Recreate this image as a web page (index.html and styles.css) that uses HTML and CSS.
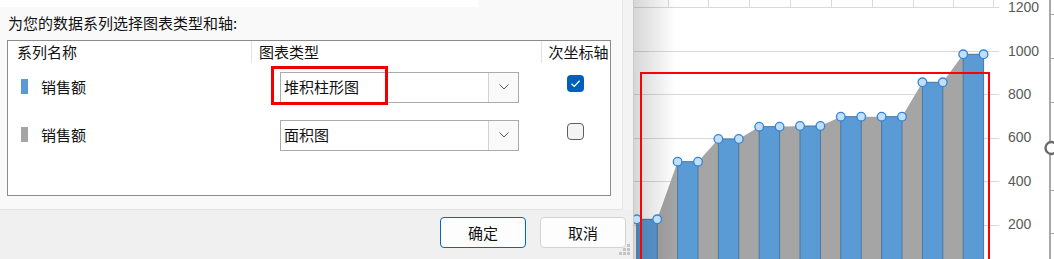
FILE: index.html
```html
<!DOCTYPE html>
<html lang="zh-CN">
<head>
  <meta charset="UTF-8">
  <title>更改图表类型</title>
  <link rel="stylesheet" href="styles.css">
</head>
<body>
  <div class="screen">
    <div class="dialog">
      <div class="panel">
        <div class="strip"></div>
        <p class="prompt">为您的数据系列选择图表类型和轴:</p>
        <div class="series-table">
          <div class="row head">
            <div class="cell name">系列名称</div>
            <div class="cell type">图表类型</div>
            <div class="cell axis">次坐标轴</div>
          </div>

          <div class="row">
            <div class="cell name"><span class="swatch blue"></span>销售额</div>
            <div class="cell type">
              <div class="select">
                <span class="select-text">堆积柱形图</span>
                <span class="select-arrow">
                  <svg width="10" height="6" viewBox="0 0 10 6"><path d="M0.5 0.5 L5 5 L9.5 0.5" fill="none" stroke="#555" stroke-width="1"/></svg>
                </span>
                <span class="mark"></span>
              </div>
            </div>
            <div class="cell axis">
              <span class="check on">
                <svg width="17" height="17" viewBox="0 0 17 17"><path d="M4.5 8.8 L7.3 11.4 L12.6 5.8" fill="none" stroke="#fff" stroke-width="1.3"/></svg>
              </span>
            </div>
          </div>

          <div class="row">
            <div class="cell name"><span class="swatch gray"></span>销售额</div>
            <div class="cell type">
              <div class="select">
                <span class="select-text">面积图</span>
                <span class="select-arrow">
                  <svg width="10" height="6" viewBox="0 0 10 6"><path d="M0.5 0.5 L5 5 L9.5 0.5" fill="none" stroke="#555" stroke-width="1"/></svg>
                </span>
              </div>
            </div>
            <div class="cell axis">
              <span class="check"></span>
            </div>
          </div>
        </div>
      </div>
      <div class="footer">
        <button class="btn default">确定</button>
        <button class="btn">取消</button>
        <svg class="grip" width="12" height="12" viewBox="0 0 12 12">
          <rect x="9" y="1" width="3" height="3" fill="#c4c4c4"/>
          <rect x="5" y="5" width="3" height="3" fill="#c4c4c4"/>
          <rect x="9" y="5" width="3" height="3" fill="#c4c4c4"/>
          <rect x="1" y="9" width="3" height="3" fill="#c4c4c4"/>
          <rect x="5" y="9" width="3" height="3" fill="#c4c4c4"/>
          <rect x="9" y="9" width="3" height="3" fill="#c4c4c4"/>
        </svg>
      </div>
    </div>

    <div class="chart">
      <svg width="420" height="259" viewBox="634 0 420 259">
        <defs>
          <linearGradient id="shade" x1="0" x2="1" y1="0" y2="0">
            <stop offset="0" stop-color="#000" stop-opacity="0.16"/>
            <stop offset="1" stop-color="#000" stop-opacity="0"/>
          </linearGradient>
        </defs>
        <rect x="634" y="0" width="420" height="259" fill="#fff"/>

        <!-- gridlines -->
        <g stroke="#d9d9d9" stroke-width="1">
          <line x1="634" y1="7.5" x2="999" y2="7.5"/>
          <line x1="634" y1="51.5" x2="999" y2="51.5"/>
          <line x1="634" y1="94.5" x2="999" y2="94.5"/>
          <line x1="634" y1="138.5" x2="999" y2="138.5"/>
          <line x1="634" y1="181.5" x2="999" y2="181.5"/>
          <line x1="634" y1="225.5" x2="999" y2="225.5"/>
          <line x1="668.5" y1="0" x2="668.5" y2="7"/>
          <line x1="708.5" y1="0" x2="708.5" y2="7"/>
          <line x1="749.5" y1="0" x2="749.5" y2="7"/>
          <line x1="790.5" y1="0" x2="790.5" y2="7"/>
          <line x1="831.5" y1="0" x2="831.5" y2="7"/>
          <line x1="872.5" y1="0" x2="872.5" y2="7"/>
          <line x1="913.5" y1="0" x2="913.5" y2="7"/>
          <line x1="953.5" y1="0" x2="953.5" y2="7"/>
          <line x1="993.5" y1="0" x2="993.5" y2="7"/>
        </g>

        <!-- area series -->
        <polygon fill="#a5a5a5" points="636.8,219.3 657.2,219.3 677.6,161.7 698,161.7 718.4,139 738.8,139 759.2,126.7 779.6,126.7 800,126 820.4,126 840.8,116.7 861.2,116.7 881.6,116.7 902,116.7 922.4,82.3 942.8,82.3 963.2,54.3 983.6,54.3 983.6,259 636.8,259"/>

        <!-- column series -->
        <g fill="#5b9bd5" stroke="#4a78a6" stroke-width="1">
          <rect x="636.8" y="219.3" width="20.4" height="45"/>
          <rect x="677.6" y="161.7" width="20.4" height="100"/>
          <rect x="718.4" y="139" width="20.4" height="125"/>
          <rect x="759.2" y="126.7" width="20.4" height="135"/>
          <rect x="800" y="126" width="20.4" height="135"/>
          <rect x="840.8" y="116.7" width="20.4" height="145"/>
          <rect x="881.6" y="116.7" width="20.4" height="145"/>
          <rect x="922.4" y="82.3" width="20.4" height="180"/>
          <rect x="963.2" y="54.3" width="20.4" height="210"/>
        </g>

        <rect x="634" y="0" width="42" height="259" fill="url(#shade)"/>

        <!-- selection handles -->
        <g fill="#c3def5" stroke="#2f86dc" stroke-width="1.3">
          <circle cx="636.8" cy="219.3" r="4.3"/>
          <circle cx="657.2" cy="219.3" r="4.3"/>
          <circle cx="677.6" cy="161.7" r="4.3"/>
          <circle cx="698" cy="161.7" r="4.3"/>
          <circle cx="718.4" cy="139" r="4.3"/>
          <circle cx="738.8" cy="139" r="4.3"/>
          <circle cx="759.2" cy="126.7" r="4.3"/>
          <circle cx="779.6" cy="126.7" r="4.3"/>
          <circle cx="800" cy="126" r="4.3"/>
          <circle cx="820.4" cy="126" r="4.3"/>
          <circle cx="840.8" cy="116.7" r="4.3"/>
          <circle cx="861.2" cy="116.7" r="4.3"/>
          <circle cx="881.6" cy="116.7" r="4.3"/>
          <circle cx="902" cy="116.7" r="4.3"/>
          <circle cx="922.4" cy="82.3" r="4.3"/>
          <circle cx="942.8" cy="82.3" r="4.3"/>
          <circle cx="963.2" cy="54.3" r="4.3"/>
          <circle cx="983.6" cy="54.3" r="4.3"/>
        </g>

        <!-- annotation -->
        <rect x="641" y="73" width="348" height="200" fill="none" stroke="#ff0000" stroke-width="2"/>

        <!-- secondary axis labels -->
        <g class="axis-label">
          <text x="1008" y="12">1200</text>
          <text x="1008" y="56">1000</text>
          <text x="1008" y="99">800</text>
          <text x="1008" y="142">600</text>
          <text x="1008" y="186">400</text>
          <text x="1008" y="229">200</text>
        </g>

        <!-- neighbouring chart edge -->
        <line x1="1050" y1="0" x2="1050" y2="259" stroke="#8c8c8c" stroke-width="1.5"/>
        <g stroke="#a6a6a6" stroke-width="1">
          <line x1="1050" y1="14.5" x2="1054" y2="14.5"/>
          <line x1="1050" y1="58.5" x2="1054" y2="58.5"/>
          <line x1="1050" y1="102.5" x2="1054" y2="102.5"/>
          <line x1="1050" y1="190.5" x2="1054" y2="190.5"/>
          <line x1="1050" y1="233.5" x2="1054" y2="233.5"/>
        </g>
        <circle cx="1051.5" cy="148" r="6" fill="#fff" stroke="#6a6a6a" stroke-width="2.4"/>
      </svg>
    </div>
  </div>
</body>
</html>
```

FILE: styles.css
```css
body {
  margin: 0;
  font-family: "Noto Sans CJK SC", "Liberation Sans", sans-serif;
  font-size: 15px;
  color: #111;
  background: #fff;
}
.screen {
  display: flex;
  width: 1054px;
  height: 259px;
  overflow: hidden;
}

/* dialog */
.dialog {
  position: relative;
  width: 634px;
  flex: none;
  display: flex;
  flex-direction: column;
  background: #f3f3f3;
  border-right: 1px solid #c9c9c9;
  box-sizing: border-box;
}
.panel {
  width: 623px;
  height: 210px;
  box-sizing: border-box;
  background: #f9f9f9;
  border-right: 1px solid #e6e6e6;
  border-bottom: 1px solid #e3e3e3;
}
.strip {
  width: 478px;
  height: 7px;
  background: #fff;
}
.prompt {
  margin: 6px 0 7px 8px;
  line-height: 20px;
}
.series-table {
  margin-left: 7px;
  width: 604px;
  height: 156px;
  box-sizing: border-box;
  border: 1px solid #8c8c8c;
  background: #fff;
}
.row {
  display: grid;
  grid-template-columns: 243px 290px 1fr;
  height: 48px;
  align-items: center;
}
.row.head {
  height: 22px;
  line-height: 22px;
}
.head .cell.name { padding-left: 9px; }
.head .cell.type { padding-left: 7px; border-left: 1px solid #e3e3e3; }
.head .cell.axis { padding-left: 5px; border-left: 1px solid #e3e3e3; white-space: nowrap; }

.cell.name {
  display: flex;
  align-items: center;
}
.row:not(.head) .cell.name { margin-top: -2px; }
.swatch {
  width: 7px;
  height: 15px;
  margin: 0 13px 0 13px;
}
.swatch.blue { background: #5b9bd5; }
.swatch.gray { background: #a5a5a5; }

.select {
  position: relative;
  margin-left: 29px;
  width: 239px;
  height: 31px;
  box-sizing: border-box;
  border: 1px solid #ababab;
  background: #fff;
  display: flex;
  align-items: center;
}
.select-text {
  flex: 1;
  padding-left: 3px;
  line-height: 20px;
}
.select-arrow {
  width: 30px;
  height: 29px;
  box-sizing: border-box;
  border-left: 1px solid #d2d2d2;
  background: #fafafa;
  display: flex;
  align-items: center;
  justify-content: center;
}
.mark {
  position: absolute;
  left: -10px;
  top: -7px;
  width: 117px;
  height: 39px;
  box-sizing: border-box;
  border: 3px solid #f00000;
}

.cell.axis {
  display: flex;
  justify-content: center;
  align-self: start;
}
.row:not(.head) .cell.axis { margin-top: 12px; }
.check {
  width: 17px;
  height: 17px;
  box-sizing: border-box;
  border: 1px solid #5f5f5f;
  border-radius: 4px;
  background: #f4f4f4;
}
.check.on {
  border: none;
  background: #005fb8;
}
.check svg { display: block; }

.footer {
  flex: 1;
  background: #f0f0f0;
  display: flex;
  align-items: flex-start;
  padding: 7px 0 0 440px;
  gap: 14px;
}
.btn {
  width: 86px;
  height: 31px;
  font-family: inherit;
  font-size: 15px;
  color: #111;
  background: #fdfdfd;
  border: 1px solid #d3d3d3;
  border-radius: 4px;
  padding: 0;
}
.btn.default {
  border-color: #0067c0;
}
.grip {
  position: absolute;
  right: 3px;
  bottom: 4px;
}

/* chart */
.chart {
  flex: 1;
}
.chart svg { display: block; }
.axis-label text {
  font-family: "Liberation Sans", sans-serif;
  font-size: 14px;
  fill: #595959;
}
```
